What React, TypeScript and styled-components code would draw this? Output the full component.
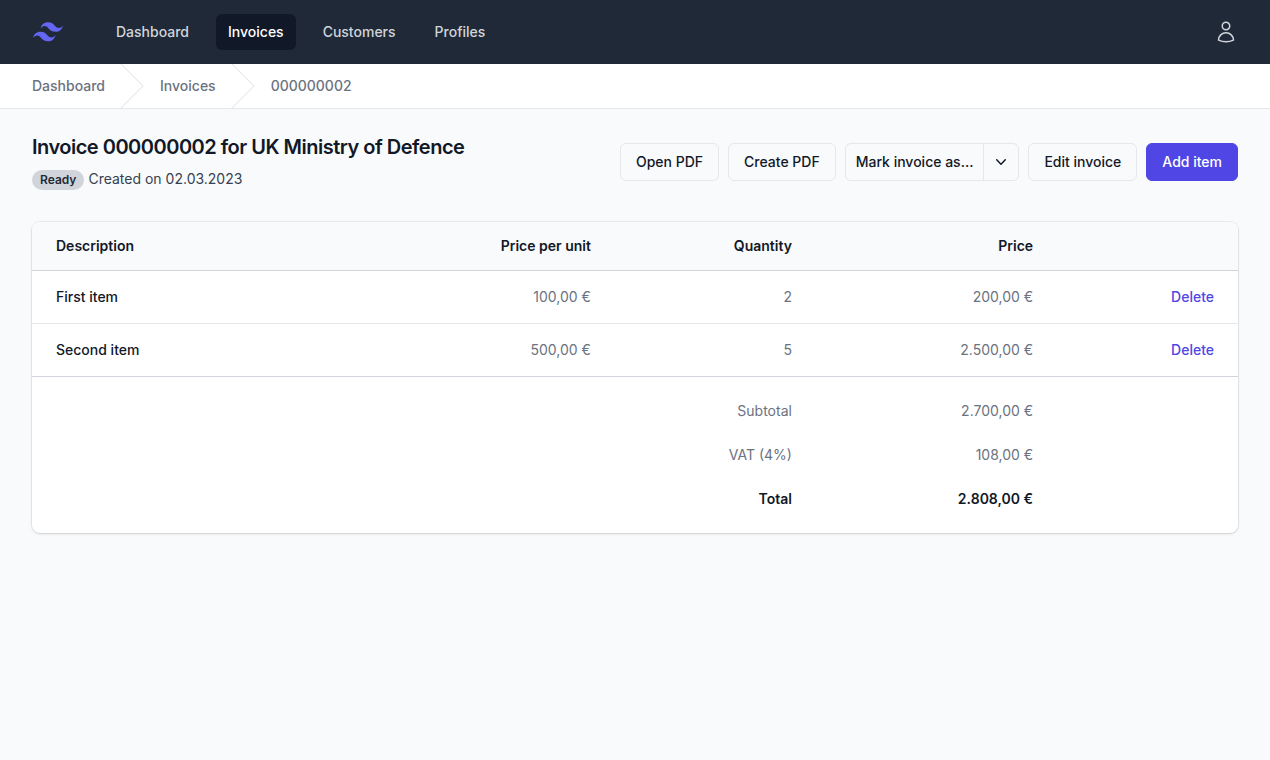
import React from "react";
import styled, { createGlobalStyle } from "styled-components";

const GlobalStyle = createGlobalStyle`
  *, *::before, *::after { box-sizing: border-box; }
  body {
    margin: 0;
    background: #f9fafb;
    color: #111827;
    font-family: Inter, "Liberation Sans", sans-serif;
    font-size: 14px;
    line-height: 20px;
    -webkit-font-smoothing: antialiased;
  }
  button { font: inherit; color: inherit; cursor: pointer; margin: 0; }
  a { color: inherit; text-decoration: none; }
  svg { display: block; }
`;

const TopBar = styled.header`
  display: flex;
  align-items: center;
  height: 64px;
  padding: 0 32px;
  background: #1f2937;
`;

const Logo = styled.a`
  display: block;
  width: 32px;
  height: 32px;
`;

const MainNav = styled.nav`
  display: flex;
  gap: 15px;
  margin-left: 40px;
`;

const NavLink = styled.a<{ $active?: boolean }>`
  padding: 8px 12px;
  border-radius: 6px;
  font-weight: 500;
  color: ${(p) => (p.$active ? "#ffffff" : "#d1d5db")};
  background: ${(p) => (p.$active ? "#111827" : "transparent")};
`;

const ProfileButton = styled.button`
  margin-left: auto;
  padding: 0;
  border: 0;
  background: none;
  color: #d1d5db;
`;

const Breadcrumb = styled.nav`
  background: #ffffff;
  border-bottom: 1px solid #e5e7eb;
  padding: 0 32px;
`;

const CrumbList = styled.ol`
  display: flex;
  gap: 15px;
  height: 44px;
  margin: 0;
  padding: 0;
  list-style: none;
`;

const Crumb = styled.li`
  display: flex;
  align-items: center;
  gap: 16px;
  font-weight: 500;
  color: #6b7280;
`;

const Content = styled.main`
  padding: 24px 32px;
`;

const PageHeader = styled.div`
  display: flex;
  align-items: center;
  justify-content: space-between;
  gap: 16px;
  padding: 0 0 32px;
`;

const Title = styled.h1`
  margin: 0;
  font-size: 20px;
  line-height: 28px;
  font-weight: 600;
  letter-spacing: -0.025em;
`;

const Meta = styled.div`
  display: flex;
  align-items: flex-start;
  gap: 4px;
  margin-top: 8px;
  color: #374151;
`;

const Badge = styled.span`
  margin-top: 1px;
  padding: 0 8px;
  border-radius: 10px;
  background: #d1d5db;
  color: #1f2937;
  font-size: 12px;
  font-weight: 600;
`;

const Actions = styled.div`
  display: flex;
  gap: 9px;
`;

const Button = styled.button<{ $primary?: boolean }>`
  padding: 8px 15px;
  border: 1px solid ${(p) => (p.$primary ? "#4f46e5" : "#e5e7eb")};
  border-radius: 6px;
  background: ${(p) => (p.$primary ? "#4f46e5" : "transparent")};
  color: ${(p) => (p.$primary ? "#ffffff" : "#111827")};
  font-weight: 500;
  white-space: nowrap;
`;

const SplitButton = styled.div`
  display: flex;
  border: 1px solid #e5e7eb;
  border-radius: 6px;
`;

const SplitMain = styled.button`
  padding: 8px 10px;
  border: 0;
  background: none;
  font-weight: 500;
  white-space: nowrap;
`;

const SplitToggle = styled.button`
  display: flex;
  align-items: center;
  padding: 0 7px;
  border: 0;
  border-left: 1px solid #e5e7eb;
  background: none;
`;

const Card = styled.section`
  overflow: hidden;
  border-radius: 8px;
  background: #ffffff;
  box-shadow: 0 0 0 1px rgba(0, 0, 0, 0.05), 0 1px 3px rgba(0, 0, 0, 0.1),
    0 1px 2px -1px rgba(0, 0, 0, 0.1);
`;

const Table = styled.table`
  width: 100%;
  table-layout: fixed;
  border-collapse: separate;
  border-spacing: 0;
`;

const Column = styled.col<{ $width?: string }>`
  width: ${(p) => p.$width ?? "auto"};
`;

const HeadCell = styled.th<{ $left?: boolean }>`
  padding: 14px 24px;
  border-bottom: 1px solid #d1d5db;
  background: #f9fafb;
  font-weight: 600;
  text-align: ${(p) => (p.$left ? "left" : "right")};
`;

const ItemCell = styled.td<{ $name?: boolean; $last?: boolean }>`
  padding: 16px 24px;
  border-bottom: 1px solid ${(p) => (p.$last ? "#d1d5db" : "#e5e7eb")};
  color: ${(p) => (p.$name ? "#111827" : "#6b7280")};
  font-weight: ${(p) => (p.$name ? 500 : 400)};
  text-align: ${(p) => (p.$name ? "left" : "right")};
`;

const SumLabel = styled.th<{ $strong?: boolean }>`
  padding: 24px 24px 0;
  color: ${(p) => (p.$strong ? "#111827" : "#6b7280")};
  font-weight: ${(p) => (p.$strong ? 600 : 400)};
  text-align: right;
`;

const SumValue = styled(SumLabel).attrs({ as: "td" })``;

const Totals = styled.tfoot`
  tr:last-child > * { padding-bottom: 24px; }
`;

const DeleteButton = styled.button`
  padding: 0;
  border: 0;
  background: none;
  color: #4f46e5;
  font-weight: 500;
`;

const items = [
  { name: "First item", unit: "100,00 €", quantity: 2, price: "200,00 €" },
  { name: "Second item", unit: "500,00 €", quantity: 5, price: "2.500,00 €" },
];

const totals = [
  { label: "Subtotal", value: "2.700,00 €" },
  { label: "VAT (4%)", value: "108,00 €" },
  { label: "Total", value: "2.808,00 €", strong: true },
];

const LogoMark = () => (
  <svg width="32" height="32" viewBox="-1.8 -12.3 57.6 57.6" fill="#6366f1" aria-hidden="true">
    <path
      fillRule="evenodd"
      d="M27 -1c-7.2 0-11.7 3.8-13.5 11.4 2.7-3.8 5.85-5.2 9.45-4.25 2.054.54 3.522 2.1 5.147 3.85C30.744 12.8 33.808 16.1 40.5 16.1c7.2 0 11.7-3.8 13.5-11.4-2.7 3.8-5.85 5.2-9.45 4.25-2.054-.54-3.522-2.1-5.147-3.85C36.756 2.3 33.692-1 27-1zM13.5 16.1C6.3 16.1 1.8 19.9 0 27.5c2.7-3.8 5.85-5.2 9.45-4.25 2.054.54 3.522 2.1 5.147 3.85C17.244 29.9 20.308 33.2 27 33.2c7.2 0 11.7-3.8 13.5-11.4-2.7 3.8-5.85 5.2-9.45 4.25-2.054-.54-3.522-2.1-5.147-3.85C23.256 19.4 20.192 16.1 13.5 16.1z"
    />
  </svg>
);

const UserIcon = () => (
  <svg width="24" height="24" viewBox="0 0 24 24" fill="none" stroke="currentColor" strokeWidth="1.5" strokeLinecap="round" strokeLinejoin="round" aria-hidden="true">
    <path d="M15.75 6a3.75 3.75 0 11-7.5 0 3.75 3.75 0 017.5 0zM4.501 20.118a7.5 7.5 0 0114.998 0A17.933 17.933 0 0112 21.75c-2.676 0-5.216-.584-7.499-1.632z" />
  </svg>
);

const ChevronDown = () => (
  <svg width="20" height="20" viewBox="0 0 20 20" fill="currentColor" aria-hidden="true">
    <path
      fillRule="evenodd"
      clipRule="evenodd"
      d="M5.23 7.21a.75.75 0 011.06.02L10 11.168l3.71-3.938a.75.75 0 111.08 1.04l-4.25 4.5a.75.75 0 01-1.08 0l-4.25-4.5a.75.75 0 01.02-1.06z"
    />
  </svg>
);

const CrumbSeparator = () => (
  <svg width="24" height="44" viewBox="0 0 24 44" fill="#e5e7eb" aria-hidden="true">
    <path d="M.293 0l22 22-22 22h1.414l22-22-22-22H.293z" />
  </svg>
);

export default function App() {
  return (
    <>
      <GlobalStyle />
      <TopBar>
        <Logo href="#" aria-label="Home">
          <LogoMark />
        </Logo>
        <MainNav aria-label="Main">
          <NavLink href="#">Dashboard</NavLink>
          <NavLink href="#" $active aria-current="page">Invoices</NavLink>
          <NavLink href="#">Customers</NavLink>
          <NavLink href="#">Profiles</NavLink>
        </MainNav>
        <ProfileButton type="button" aria-label="Account">
          <UserIcon />
        </ProfileButton>
      </TopBar>
      <Breadcrumb aria-label="Breadcrumb">
        <CrumbList>
          <Crumb>
            <a href="#">Dashboard</a>
          </Crumb>
          <Crumb>
            <CrumbSeparator />
            <a href="#">Invoices</a>
          </Crumb>
          <Crumb>
            <CrumbSeparator />
            <a href="#" aria-current="page">000000002</a>
          </Crumb>
        </CrumbList>
      </Breadcrumb>
      <Content>
        <PageHeader>
          <div>
            <Title>Invoice 000000002 for UK Ministry of Defence</Title>
            <Meta>
              <Badge>Ready</Badge>
              <span>Created on 02.03.2023</span>
            </Meta>
          </div>
          <Actions>
            <Button type="button">Open PDF</Button>
            <Button type="button">Create PDF</Button>
            <SplitButton>
              <SplitMain type="button">Mark invoice as...</SplitMain>
              <SplitToggle type="button" aria-label="Open options">
                <ChevronDown />
              </SplitToggle>
            </SplitButton>
            <Button type="button">Edit invoice</Button>
            <Button type="button" $primary>Add item</Button>
          </Actions>
        </PageHeader>
        <Card>
          <Table>
            <colgroup>
              <Column $width="30%" />
              <Column />
              <Column $width="201px" />
              <Column $width="20%" />
              <Column $width="15%" />
            </colgroup>
            <thead>
              <tr>
                <HeadCell scope="col" $left>Description</HeadCell>
                <HeadCell scope="col">Price per unit</HeadCell>
                <HeadCell scope="col">Quantity</HeadCell>
                <HeadCell scope="col">Price</HeadCell>
                <HeadCell as="td" />
              </tr>
            </thead>
            <tbody>
              {items.map((item, i) => {
                const last = i === items.length - 1;
                return (
                  <tr key={item.name}>
                    <ItemCell $name $last={last}>{item.name}</ItemCell>
                    <ItemCell $last={last}>{item.unit}</ItemCell>
                    <ItemCell $last={last}>{item.quantity}</ItemCell>
                    <ItemCell $last={last}>{item.price}</ItemCell>
                    <ItemCell $last={last}>
                      <DeleteButton type="button">Delete</DeleteButton>
                    </ItemCell>
                  </tr>
                );
              })}
            </tbody>
            <Totals>
              {totals.map((row) => (
                <tr key={row.label}>
                  <SumLabel scope="row" colSpan={3} $strong={row.strong}>{row.label}</SumLabel>
                  <SumValue $strong={row.strong}>{row.value}</SumValue>
                  <td />
                </tr>
              ))}
            </Totals>
          </Table>
        </Card>
      </Content>
    </>
  );
}
